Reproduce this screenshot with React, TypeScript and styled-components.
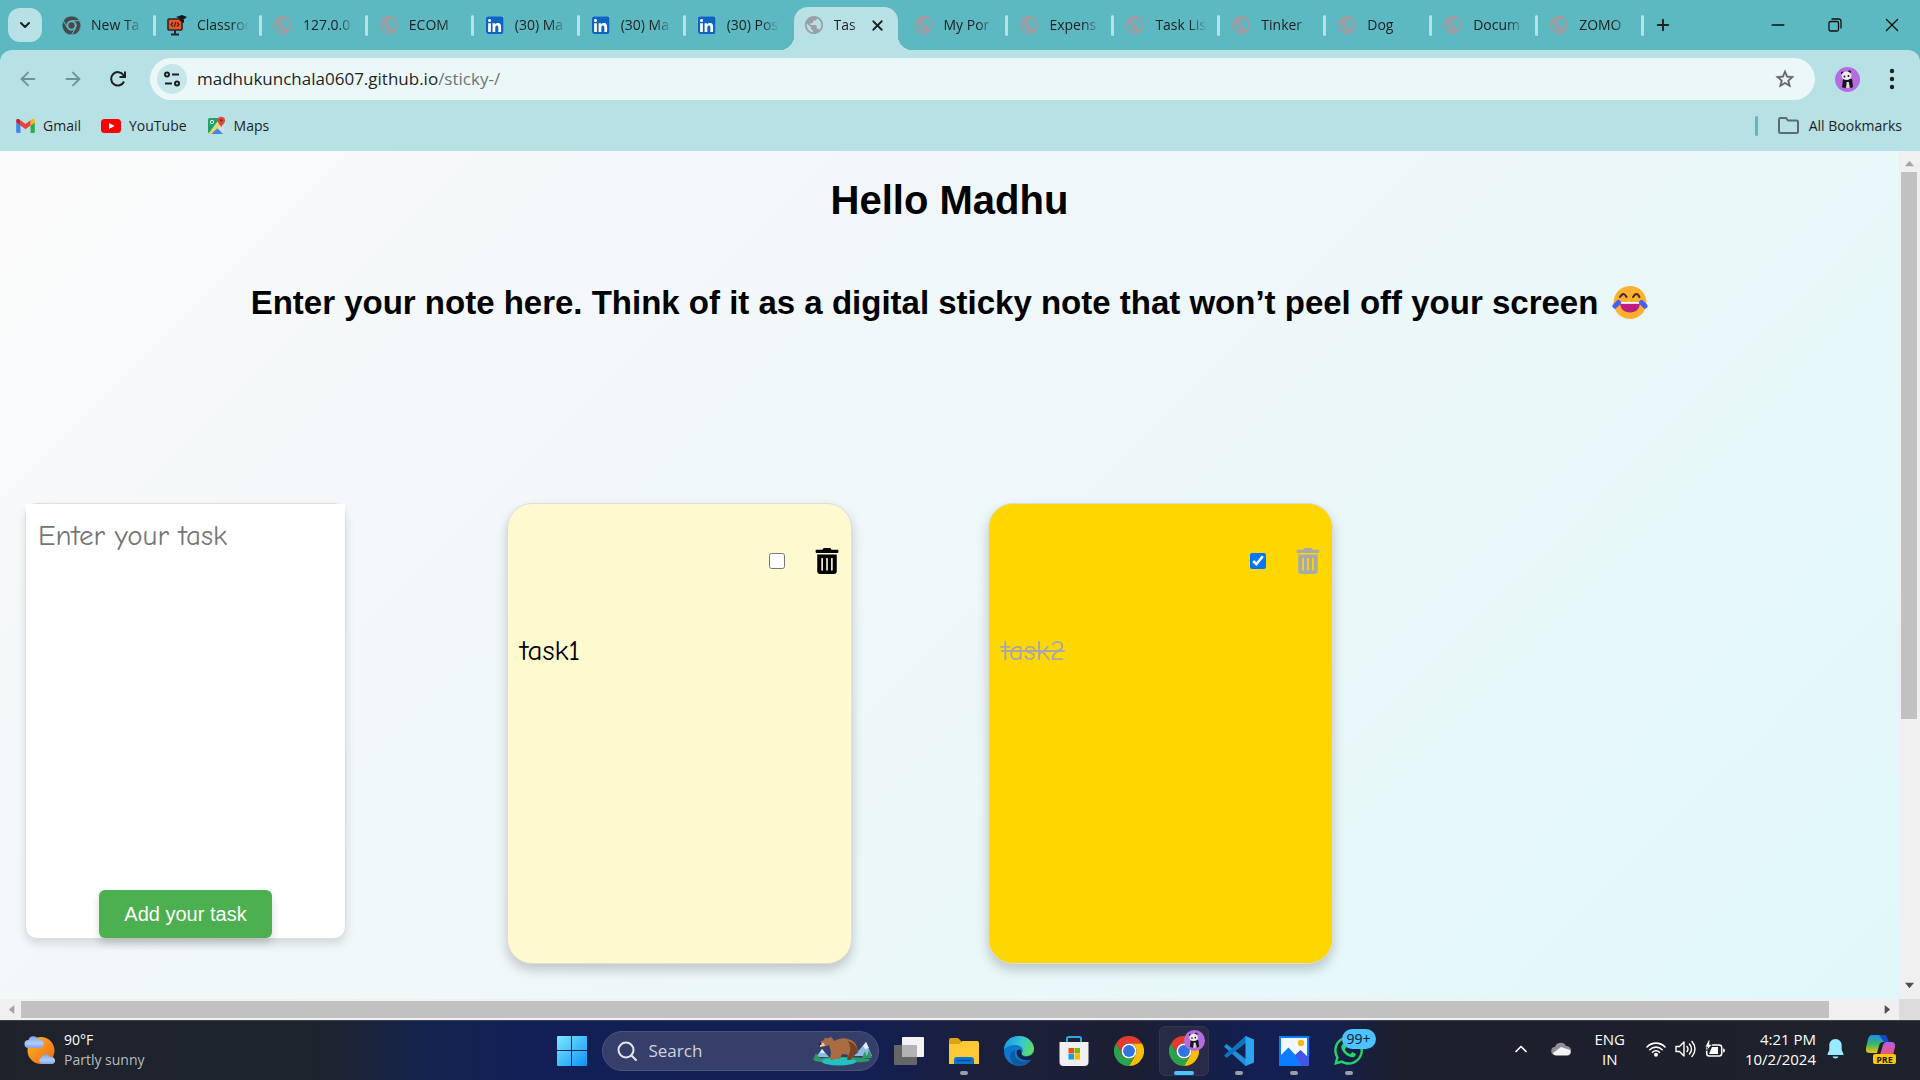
import React, { useState } from "react";
import styled, { createGlobalStyle, css } from "styled-components";
import { FaLinkedin, FaTrashAlt, FaWhatsapp } from "react-icons/fa";
import { ArrowLeft, ArrowRight, ChevronDown, ChevronUp, Minus, Plus, X } from "lucide-react";

const uiFont = `"Segoe UI", "Open Sans", "Noto Sans", sans-serif`;
const pageFont = `Arial, "Liberation Sans", sans-serif`;
const noteFont = `"Comic Neue", "Comic Sans MS", Lato, sans-serif`;

const GlobalStyle = createGlobalStyle`
  *, *::before, *::after { box-sizing: border-box; }
  body { margin: 0; font-family: ${uiFont}; color: #1f1f1f; }
  button, input, textarea { font: inherit; color: inherit; }
  svg { display: block; flex: none; }
`;

const Screen = styled.div`
  display: flex;
  flex-direction: column;
  height: 100vh;
  overflow: hidden;
  background: #5cb8c1;
`;

const PlainButton = styled.button`
  display: flex;
  align-items: center;
  justify-content: center;
  padding: 0;
  border: 0;
  background: none;
`;

/* ---------- tab strip ---------- */

const TabStrip = styled.div`
  display: flex;
  height: 50px;
  padding-left: 8px;
`;

const TabSearch = styled(PlainButton)`
  width: 34px;
  height: 34px;
  margin: 8px 6px 0 0;
  border-radius: 12px;
  background: #b8e1e5;
`;

const TabList = styled.div`
  display: flex;
  flex: 0 1 1594px;
  min-width: 0;
`;

const TabItem = styled.div<{ $active: boolean; $divider: boolean }>`
  position: relative;
  display: flex;
  flex: 1 1 0;
  min-width: 0;
  align-items: center;
  padding: 0 11px 0 13px;
  ${(p) =>
    p.$divider &&
    css`
      &::after {
        content: "";
        position: absolute;
        right: -2px;
        top: 15px;
        width: 3px;
        height: 21px;
        border-radius: 2px;
        background: #b8e1e5;
      }
    `}
  ${(p) =>
    p.$active &&
    css`
      margin: 7px 3px 0 4px;
      padding: 0 12px 7px 10px;
      border-radius: 14px 14px 0 0;
      background: #b8e1e5;
      &::before,
      &::after {
        content: "";
        position: absolute;
        bottom: 0;
        width: 14px;
        height: 14px;
      }
      &::before {
        right: 100%;
        background: radial-gradient(circle at 0 0, transparent 14px, #b8e1e5 14px);
      }
      &::after {
        left: 100%;
        background: radial-gradient(circle at 100% 0, transparent 14px, #b8e1e5 14px);
      }
    `}
`;

const TabButton = styled.button`
  display: flex;
  flex: 1;
  min-width: 0;
  align-items: center;
  gap: 10px;
  padding: 0;
  border: 0;
  background: none;
  text-align: left;
`;

const TabIconSlot = styled.span`
  display: flex;
  flex: none;
  align-items: center;
  justify-content: center;
  width: 20px;
`;

const TabLabel = styled.span`
  flex: 1;
  min-width: 0;
  overflow: hidden;
  font-size: 14px;
  line-height: 20px;
  white-space: nowrap;
  mask-image: linear-gradient(to left, transparent, #000 18px);
`;

const NewTab = styled(PlainButton)`
  width: 42px;
`;

const WindowControls = styled.div`
  display: flex;
  margin-left: auto;
  color: #111;
`;

const WindowButton = styled(PlainButton)`
  width: 57px;
`;

/* ---------- toolbar ---------- */

const ChromeTop = styled.header`
  flex: none;
  border-radius: 12px 12px 0 0;
  background: #b8e1e5;
`;

const Toolbar = styled.div`
  display: flex;
  align-items: center;
  height: 57px;
  padding: 8px 14px 7px 5px;
`;

const NavButton = styled(PlainButton)<{ $dim?: boolean }>`
  width: 45px;
  height: 42px;
  color: ${(p) => (p.$dim ? "#6f9296" : "#1f1f1f")};
`;

const AddressBar = styled.div`
  display: flex;
  flex: 1;
  align-items: center;
  height: 42px;
  margin: 0 15px 0 10px;
  padding: 0 19px 0 7px;
  border-radius: 21px;
  background: #ecf8f8;
`;

const SiteInfo = styled(PlainButton)`
  width: 30px;
  height: 30px;
  margin-right: 10px;
  border-radius: 50%;
  background: #c5e7ea;
`;

const UrlInput = styled.input`
  field-sizing: content;
  padding: 0;
  border: 0;
  outline: 0;
  background: none;
  font-size: 17px;
  line-height: 24px;
`;

const UrlPath = styled.span`
  color: #6b7576;
  font-size: 17px;
  line-height: 24px;
`;

const StarButton = styled(PlainButton)`
  margin-left: auto;
`;

const ProfileButton = styled(PlainButton)`
  width: 34px;
`;

const MenuButton = styled(PlainButton)`
  width: 28px;
  margin-left: 14px;
`;

const Bookmarks = styled.nav`
  display: flex;
  align-items: center;
  gap: 20px;
  height: 44px;
  padding: 0 18px 7px 16px;
`;

const BookmarkLink = styled.a<{ $gap?: number }>`
  display: flex;
  align-items: center;
  gap: ${(p) => p.$gap ?? 8}px;
  color: #1f1f1f;
  font-size: 14px;
  line-height: 20px;
  text-decoration: none;
`;

const BookmarkDivider = styled.span`
  width: 3px;
  height: 20px;
  margin-left: auto;
  border-radius: 2px;
  background: #5cb8c1;
`;

/* ---------- page ---------- */

const Viewport = styled.div`
  display: grid;
  flex: 1;
  grid-template-columns: minmax(0, 1fr) 21px;
  grid-template-rows: minmax(0, 1fr) 21px;
  min-height: 0;
`;

const Page = styled.main`
  overflow: hidden;
  padding: 26px 25px 0;
  background: linear-gradient(135deg, #fafafa, #f4f8fa 25%, #eef7f9 50%, #e8f8f9 72%, #e0f7fa);
  color: #000;
  font-family: ${pageFont};
`;

const Heading = styled.h1`
  margin: 0;
  font-size: 40px;
  line-height: 46px;
  text-align: center;
`;

const Subheading = styled.h2`
  display: flex;
  align-items: center;
  justify-content: center;
  gap: 14px;
  margin: 57px 0 0;
  font-size: 33px;
  line-height: 46px;
`;

const Board = styled.div`
  display: flex;
  align-items: flex-start;
  gap: 136px;
  margin-top: 177px;
`;

const TaskForm = styled.form`
  display: flex;
  flex: none;
  flex-direction: column;
  align-items: center;
  width: 321px;
  height: 436px;
  margin-right: 25px;
  border: 1px solid #ddd;
  border-radius: 12px;
  background: #fff;
  box-shadow: 0 5px 10px rgba(0, 0, 0, 0.12);
`;

const TaskInput = styled.textarea`
  flex: 1;
  width: 100%;
  padding: 13px 12px;
  border: 0;
  outline: 0;
  resize: none;
  background: #fff;
  font-family: ${noteFont};
  font-size: 29px;
  line-height: 38px;
  &::placeholder {
    color: #757575;
  }
`;

const AddButton = styled.button`
  width: 173px;
  height: 48px;
  border: 0;
  border-radius: 6px;
  background: #4caf50;
  box-shadow: 0 5px 8px rgba(0, 0, 0, 0.16);
  color: #fff;
  font-size: 20px;
  line-height: 24px;
`;

const Note = styled.article<{ $done: boolean }>`
  flex: none;
  width: 345px;
  min-height: 461px;
  padding: 43px 11px 20px 12px;
  border: 1px solid #ddd;
  border-radius: 25px;
  background: ${(p) => (p.$done ? "#ffd700" : "#fff9d0")};
  box-shadow: 0 6px 12px rgba(0, 0, 0, 0.2);
  color: ${(p) => (p.$done ? "#a9a9a9" : "#000")};
`;

const NoteActions = styled.div`
  display: flex;
  align-items: center;
  justify-content: flex-end;
  gap: 29px;
  height: 27px;
`;

const Check = styled.input`
  width: 16px;
  height: 16px;
  margin: 0;
`;

const NoteText = styled.label<{ $done: boolean }>`
  display: block;
  margin-top: 58px;
  font-family: ${noteFont};
  font-size: 29px;
  line-height: 38px;
  text-decoration: ${(p) => (p.$done ? "line-through" : "none")};
`;

/* ---------- scrollbars ---------- */

const VerticalBar = styled.div`
  display: flex;
  flex-direction: column;
  align-items: center;
  gap: 4px;
  padding: 8px 3px 9px 2px;
  background: #f0f0f0;
`;

const HorizontalBar = styled.div`
  display: flex;
  align-items: center;
  gap: 4px;
  padding: 2px 8px;
  background: #f0f0f0;
`;

const VerticalTrack = styled.div`
  flex: 1;
  width: 16px;
`;

const VerticalThumb = styled.div`
  height: 68%;
  background: #c1c1c1;
`;

const HorizontalTrack = styled.div`
  display: grid;
  flex: 1;
  grid-template-columns: 37fr 1fr;
  height: 17px;
`;

const HorizontalThumb = styled.div`
  background: #c1c1c1;
`;

const Corner = styled.div`
  background: #dcdcdc;
`;

/* ---------- taskbar ---------- */

const Taskbar = styled.footer`
  display: grid;
  flex: none;
  grid-template-columns: 1fr auto 1fr;
  align-items: center;
  height: 60px;
  border-top: 1px solid #3b4150;
  background: linear-gradient(
    90deg,
    #1e222b 0%,
    #1d232e 17%,
    #13234c 22%,
    #121f56 27%,
    #131f54 45%,
    #1b1f3a 51%,
    #1c1f33 59%,
    #121f50 65%,
    #142050 69%,
    #1d1f2c 73%,
    #1d222c 100%
  );
  color: #fff;
`;

const Weather = styled.div`
  display: flex;
  align-items: center;
  gap: 8px;
  padding: 0 0 2px 24px;
`;

const WeatherText = styled.div`
  display: flex;
  flex-direction: column;
  font-size: 14px;
  line-height: 20px;
`;

const Muted = styled.span`
  color: #b9bcc0;
`;

const AppRow = styled.div`
  display: flex;
  align-items: center;
  gap: 5px;
`;

const AppButton = styled(PlainButton)<{ $active?: boolean; $running?: boolean }>`
  position: relative;
  width: 50px;
  height: 50px;
  border-radius: 6px;
  ${(p) =>
    p.$active &&
    css`
      border: 1px solid #323651;
      background: #272b45;
    `}
  ${(p) =>
    (p.$active || p.$running) &&
    css`
      &::after {
        content: "";
        position: absolute;
        bottom: ${p.$active ? 0 : 1}px;
        left: 50%;
        width: ${p.$active ? 20 : 8}px;
        height: 4px;
        border-radius: 2px;
        background: ${p.$active ? "#4cc2ff" : "#9b9dac"};
        transform: translateX(-50%);
      }
    `}
`;

const Badge = styled.span`
  position: absolute;
  top: 3px;
  left: 18px;
  padding: 0 5px;
  border-radius: 10px;
  background: #4cc2ff;
  color: #0b1a2a;
  font-size: 14px;
  line-height: 20px;
`;

const ProfileBadge = styled.span`
  position: absolute;
  top: 3px;
  right: 3px;
`;

const SearchBox = styled.label`
  display: flex;
  align-items: center;
  gap: 12px;
  width: 277px;
  height: 40px;
  padding: 0 6px 0 14px;
  border: 1px solid #4a5479;
  border-radius: 20px;
  background: #353f69;
`;

const SearchInput = styled.input`
  flex: 1;
  min-width: 0;
  padding: 0;
  border: 0;
  outline: 0;
  background: none;
  font-size: 17px;
  line-height: 24px;
  &::placeholder {
    color: #d0d3de;
    opacity: 1;
  }
`;

const Tray = styled.div`
  display: flex;
  align-items: center;
  justify-content: flex-end;
  padding: 0 24px 3px 0;
`;

const TrayStack = styled.div<{ $align: string }>`
  display: flex;
  flex-direction: column;
  font-size: 15px;
  line-height: 20px;
  text-align: ${(p) => p.$align};
`;

const CloudSlot = styled.span`
  margin: 0 23px 0 20px;
`;

const StatusIcons = styled.div`
  display: flex;
  align-items: center;
  gap: 9px;
  margin: 0 20px 0 21px;
`;

const TrayIcon = styled.span`
  margin-left: 11px;
`;

const CopilotIcon = styled.span`
  margin-left: 22px;
`;

/* ---------- drawings ---------- */

const Globe = ({ color = "#9a9ea5" }: { color?: string }) => (
  <svg width="20" height="20" viewBox="1 1 22 22">
    <path
      fill={color}
      d="M12 2C6.48 2 2 6.48 2 12s4.48 10 10 10 10-4.48 10-10S17.52 2 12 2zm-1 17.93c-3.95-.49-7-3.85-7-7.93 0-.62.08-1.21.21-1.79L9 15v1c0 1.1.9 2 2 2v1.93zm6.9-2.54c-.26-.81-1-1.39-1.9-1.39h-1v-3c0-.55-.45-1-1-1H8v-2h2c.55 0 1-.45 1-1V7h2c1.1 0 2-.9 2-2v-.41c2.93 1.19 5 4.06 5 7.41 0 2.08-.8 3.97-2.1 5.39z"
    />
  </svg>
);

const wedge = "M3.2 12A24 24 0 0 1 44.8 12H24A12 12 0 0 0 13.6 30Z";

const ChromeLogo = ({ size = 30, mono = false }: { size?: number; mono?: boolean }) => (
  <svg width={size} height={size} viewBox="0 0 48 48">
    <path d={wedge} fill={mono ? "#45494d" : "#e33b2e"} stroke={mono ? "#5cb8c1" : "none"} strokeWidth="2" />
    <path d={wedge} fill={mono ? "#45494d" : "#fbbc05"} stroke={mono ? "#5cb8c1" : "none"} strokeWidth="2" transform="rotate(120 24 24)" />
    <path d={wedge} fill={mono ? "#45494d" : "#2ba24c"} stroke={mono ? "#5cb8c1" : "none"} strokeWidth="2" transform="rotate(240 24 24)" />
    <circle cx="24" cy="24" r="12" fill={mono ? "#5cb8c1" : "#fff"} />
    <circle cx="24" cy="24" r={mono ? 8 : 9.5} fill={mono ? "#45494d" : "#3474e0"} />
  </svg>
);

const ClassroomIcon = () => (
  <svg width="20" height="22" viewBox="0 0 20 22">
    <rect x="1" y="5" width="14" height="11" rx="1" fill="#f4511e" stroke="#27272b" strokeWidth="1.6" />
    <path d="M6 8.5L4 10.5l2 2M10 8.5l2 2-2 2M8.7 8L7.4 13" fill="none" stroke="#27272b" strokeWidth="1.1" />
    <path d="M8 16v4M4 20.500h8" stroke="#27272b" strokeWidth="2" />
    <path d="M9 3l6-2 5 2-4 3zM12 5l5 1v3l-4-2z" fill="#15171a" />
  </svg>
);

const Panda = ({ size }: { size: number }) => (
  <svg width={size} height={size} viewBox="0 0 25 25">
    <circle cx="12.500" cy="12.500" r="12.500" fill="#b76be0" />
    <path d="M8 12h9l1 8-2.500 1.200-1-4h-3l-1 4-3.500-1z" fill="#17141a" />
    <path d="M11.500 15h2.500v6h-2.500z" fill="#ddd" />
    <circle cx="7.500" cy="6" r="1.600" fill="#17141a" />
    <circle cx="14.500" cy="4.800" r="1.600" fill="#17141a" />
    <ellipse cx="11.500" cy="8.800" rx="5" ry="4.200" fill="#eceaf0" />
    <circle cx="9.500" cy="9.500" r="1" fill="#17141a" />
    <circle cx="13.500" cy="9" r="1" fill="#17141a" />
  </svg>
);

const GmailIcon = () => (
  <svg width="19" height="14" viewBox="0 0 52 39">
    <path d="M3.500 39H12V18L0 9v26.500C0 37.500 1.500 39 3.500 39z" fill="#4285f4" />
    <path d="M40 39h8.500c2 0 3.500-1.500 3.500-3.500V9l-12 9z" fill="#34a853" />
    <path d="M40 3.500V18l12-9V4.500c0-4-5-6.500-8.500-3.700z" fill="#fbbc04" />
    <path d="M12 18V3.500L26 14 40 3.500V18L26 28.500z" fill="#ea4335" />
    <path d="M0 4.500V9l12 9V3.500L8.500.800C5-2 0 .500 0 4.500z" fill="#c5221f" />
  </svg>
);

const YouTubeIcon = () => (
  <svg width="20" height="14" viewBox="0 0 20 14">
    <rect width="20" height="14" rx="3.500" fill="#f00" />
    <path d="M8 4l5.500 3L8 10z" fill="#fff" />
  </svg>
);

const MapsIcon = () => (
  <svg width="19" height="19" viewBox="0 0 19 19">
    <path d="M1 3.500Q1 2 2.500 2H13L2 17Q1 17 1 15.500z" fill="#1fa463" />
    <path d="M2 18L9 11l7 7z" fill="#4285f4" />
    <path d="M16.500 9v8L11 11.500z" fill="#dadce0" />
    <path d="M2 17L14 4.500l2 2L4 18.500z" fill="#fdd34a" />
    <path d="M14.200 12c0-3-3.700-4-3.700-7.500a3.700 3.700 0 0 1 7.500 0C18 8 14.200 9 14.200 12z" fill="#dd4b3e" />
    <circle cx="14.200" cy="4.300" r="1.300" fill="#822b24" />
    <circle cx="5" cy="6" r="1.700" fill="none" stroke="#fff" />
  </svg>
);

const ReloadIcon = () => (
  <svg width="18" height="18" viewBox="0 0 18 18" fill="none" stroke="currentColor" strokeWidth="2">
    <path d="M15 11.500A6.700 6.700 0 1 1 14.500 5.200L15.500 6.500" />
    <path d="M16 1.500v5.500h-5.500" />
  </svg>
);

const TuneIcon = () => (
  <svg width="18" height="18" viewBox="0 0 18 18" fill="none" stroke="#1f1f1f" strokeWidth="2">
    <circle cx="4" cy="4.500" r="2" />
    <path d="M9 4.500h7M2 13.500h7" />
    <circle cx="14" cy="13.500" r="2" />
  </svg>
);

const StarIcon = () => (
  <svg width="22" height="22" viewBox="0 0 24 24" fill="#5b6364" stroke="#5b6364" strokeWidth="0.400">
    <path d="M22 9.240l-7.190-.620L12 2 9.190 8.630 2 9.240l5.460 4.730L5.820 21 12 17.270 18.180 21l-1.630-7.030L22 9.240zM12 15.400l-3.760 2.270 1-4.280-3.320-2.880 4.380-.380L12 6.100l1.710 4.040 4.380.380-3.320 2.880 1 4.280L12 15.400z" />
  </svg>
);

const DotsIcon = () => (
  <svg width="6" height="22" viewBox="0 0 6 22" fill="#1f1f1f">
    <circle cx="3" cy="3" r="2.200" />
    <circle cx="3" cy="11" r="2.200" />
    <circle cx="3" cy="19" r="2.200" />
  </svg>
);

const FolderIcon = () => (
  <svg width="21" height="17" viewBox="0 0 21 17" fill="none" stroke="#5f6a6c" strokeWidth="2">
    <path d="M1 2.500Q1 1 2.500 1H8l2 2.500h8.500Q20 3.500 20 5v9.500q0 1.500-1.500 1.500h-16Q1 16 1 14.500z" />
  </svg>
);

const RestoreIcon = () => (
  <svg width="14" height="14" viewBox="0 0 14 14" fill="none" stroke="#111" strokeWidth="1.300">
    <rect x="1" y="3.500" width="9.500" height="9.500" rx="1.500" />
    <path d="M3.500 1h7Q13 1 13 3.500v7" />
  </svg>
);

const JoyEmoji = () => (
  <svg width="36" height="36" viewBox="0 0 36 36" role="img" aria-label="face with tears of joy">
    <circle cx="18" cy="17.500" r="16.500" fill="#ffb02e" />
    <path d="M8 12q3.500-6 6.500 0M21 12q3.500-6 6.500 0" fill="none" stroke="#402a32" strokeWidth="2" strokeLinecap="round" />
    <path d="M8 17h20c0 7-4 10.500-10 10.500S8 24 8 17z" fill="#bb1d80" />
    <path d="M8 17h20v1.800H8z" fill="#fff" />
    <path d="M6.500 17.500L3 21M29.500 17.500L33 21" stroke="#3f5fff" strokeWidth="5" strokeLinecap="round" />
  </svg>
);

const Arrow = ({ d, color }: { d: string; color: string }) => (
  <svg width="9" height="9" viewBox="0 0 10 10">
    <path d={d} fill={color} />
  </svg>
);

const SunIcon = () => (
  <svg width="32" height="30" viewBox="0 0 32 30">
    <defs>
      <linearGradient id="sun" x1="0" y1="0" x2="1" y2="1">
        <stop offset="0" stopColor="#f9b81f" />
        <stop offset="1" stopColor="#f0661a" />
      </linearGradient>
      <linearGradient id="cloud" x1="0" y1="0" x2="0" y2="1">
        <stop offset="0" stopColor="#7fa2ea" />
        <stop offset="0.600" stopColor="#b3ccfa" />
        <stop offset="1" stopColor="#7ea3ec" />
      </linearGradient>
    </defs>
    <circle cx="17" cy="15.500" r="13.500" fill="url(#sun)" />
    <path d="M4.500 13a4 4 0 0 1 0-8A5 5 0 0 1 14 4.500a4.300 4.300 0 0 1 2.500 8.500z" fill="url(#cloud)" />
    <path d="M17.500 29a3.500 3.500 0 0 1 0-6.500 4.500 4.500 0 0 1 8.500-.500 3.500 3.500 0 0 1 2.500 7z" fill="url(#cloud)" />
  </svg>
);

const WindowsIcon = () => (
  <svg width="30" height="30" viewBox="0 0 30 30">
    <defs>
      <linearGradient id="win" x1="0" y1="0" x2="1" y2="1">
        <stop offset="0" stopColor="#7beaff" />
        <stop offset="1" stopColor="#0c93f5" />
      </linearGradient>
    </defs>
    <path d="M1 0h13v14H0V1q0-1 1-1zM15 0h14q1 0 1 1v13H15zM0 15h14v15H1q-1 0-1-1zM15 15h15v14q0 1-1 1H15z" fill="url(#win)" />
  </svg>
);

const BearIcon = () => (
  <svg width="60" height="30" viewBox="0 0 60 30">
    <path d="M4 21l6-8 7 8zM42 20L54 6l6 14z" fill="#8fb9e0" />
    <path d="M10 13l3 4-5 0zM54 6l3 6-4 1-2-3z" fill="#e3eefb" />
    <path d="M1 24l3-7 3 7zM4 24l2-5 3 5zM50 22l3-7 2 7zM54 22l3-8 3 8z" fill="#2c9a63" />
    <ellipse cx="30" cy="24" rx="28" ry="3" fill="#2a9c6d" />
    <ellipse cx="27" cy="25.500" rx="17" ry="4" fill="#1fc3c2" />
    <path d="M8 8q0-3 4-4l1-2.500 2 1 4-1.500 2 2 1 2q7-4 14-2 8 2 9 9l1 4-4 1-2 7h-5l1-5q-3-1-6-1l-2 5h-5l-2 1h-3l1-8-2-7q-3 2-7 1z" fill="#a96c44" />
    <path d="M36 5q7 2 9 8l1 4-4 1-3 6h-4l2-6q3-6-1-13z" fill="#74431f" />
    <path d="M8 7l4 0 1 3-5 1z" fill="#e7c7a8" />
    <circle cx="8.300" cy="7.800" r="1.200" fill="#222" />
  </svg>
);

const TaskViewIcon = () => (
  <svg width="30" height="28" viewBox="0 0 30 28">
    <rect x="0" y="8" width="23" height="20" rx="1" fill="#666" />
    <rect x="8" y="0" width="22" height="20" rx="1" fill="#f3f3f3" />
    <path d="M8 8h15v12H8z" fill="#b3b3b3" />
  </svg>
);

const ExplorerIcon = () => (
  <svg width="30" height="26" viewBox="0 0 30 26">
    <path d="M0 2q0-2 2-2h7l3 3h0v8H0z" fill="#e0a010" />
    <path d="M0 6h10l3-3h15q2 0 2 2v21H0z" fill="#fdc936" />
    <path d="M5 26v-4q0-3 3-3h14q3 0 3 3v4z" fill="#0b76d1" />
    <path d="M8 22.500h14" stroke="#0a4d96" strokeWidth="1.400" />
  </svg>
);

const EdgeIcon = () => (
  <svg width="30" height="30" viewBox="0 0 30 30">
    <defs>
      <linearGradient id="edgeTop" x1="0" y1="0.300" x2="1" y2="0.600">
        <stop offset="0" stopColor="#1b9be0" />
        <stop offset="0.550" stopColor="#36c8d0" />
        <stop offset="1" stopColor="#5fdc5c" />
      </linearGradient>
    </defs>
    <circle cx="15" cy="15" r="15" fill="#0c78d0" />
    <path d="M0 14C0 6 6 0 15 0s15 6.500 15 12.500c0 5-4 7.500-8 7.500-3 0-5-1.500-4-3 2.500-4-1-8-6.500-8C6 9 1 11 0 14z" fill="url(#edgeTop)" />
    <path d="M11 14c-2 8 5 13 12 11l4.500-2C24 28 20 30 15 30 9 30 5 24 6.500 18.500 7.500 15.500 9 14.500 11 14z" fill="#125a9f" />
    <path d="M17.500 17c-.500 3 4 5 9 2.500 2-1 3.500-3 3.500-4.500v6l-2.500 2.500C20 26 11 22 13 14.500c2-2 5-1 4.500 2.500z" fill="#1b2140" />
  </svg>
);

const StoreIcon = () => (
  <svg width="30" height="30" viewBox="0 0 30 30">
    <path d="M8 7V2.500Q8 1 9.500 1h11Q22 1 22 2.500V7" fill="none" stroke="#28a8e8" strokeWidth="2" />
    <path d="M.500 6h29v20q0 4-4 4h-21q-4 0-4-4z" fill="#f0f0f0" />
    <path d="M9.500 12H15v5.500H9.500z" fill="#f04e1f" />
    <path d="M15.500 12H21v5.500h-5.500z" fill="#7fba00" />
    <path d="M9.500 18H15v5.500H9.500z" fill="#00a4ef" />
    <path d="M15.500 18H21v5.500h-5.500z" fill="#ffb900" />
  </svg>
);

const CodeIcon = () => (
  <svg width="30" height="30" viewBox="0 0 30 30">
    <path d="M0 10.500L2.500 8 23 24v5.500L21.500 30z" fill="#1f8fd8" />
    <path d="M0 19.500L2.500 22 23 6V.500L21.500 0z" fill="#0f74bd" />
    <path d="M21.500 0L30 3.500v23L21.500 30z" fill="#2ba5ef" />
  </svg>
);

const PhotosIcon = () => (
  <svg width="30" height="30" viewBox="0 0 30 30">
    <path d="M0 0h30v30H0z" fill="#0a7cff" />
    <path d="M2 2h26v18H2z" fill="#f2f8ff" />
    <circle cx="22" cy="7" r="3.200" fill="#fdb714" />
    <path d="M0 21l9.500-9.500L20 23v7H0z" fill="#0a7cff" />
    <path d="M16 19l5.500-5L30 22v8h-7z" fill="#4553e6" />
  </svg>
);

const CloudIcon = () => (
  <svg width="20" height="14" viewBox="0 0 20 14">
    <path d="M4.500 13a4 4 0 0 1-.500-8A6 6 0 0 1 15 4a4.500 4.500 0 0 1 1 9z" fill="#8d8f94" />
    <path d="M2 11l8-6 9 3q2 5-3 5.500H5Q2.500 13.500 2 11z" fill="#f4f4f4" />
  </svg>
);

const WifiIcon = () => (
  <svg width="20" height="16" viewBox="0 0 20 16" fill="none" stroke="#fff" strokeWidth="1.600" strokeLinecap="round">
    <path d="M1 6a12.500 12.500 0 0 1 18 0M3.800 8.700a8.800 8.800 0 0 1 12.400 0M6.500 11.300a5 5 0 0 1 7 0" />
    <circle cx="10" cy="13.800" r="1.200" fill="#fff" />
  </svg>
);

const VolumeIcon = () => (
  <svg width="21" height="18" viewBox="0 0 21 18" fill="none" stroke="#fff" strokeWidth="1.400" strokeLinecap="round" strokeLinejoin="round">
    <path d="M1 6.500v5h3.500L9 16V2L4.500 6.500zM12 6.500q2 2.500 0 5M14.500 4q4 5 0 10M17 1.500q6 7.500 0 15" />
  </svg>
);

const BatteryIcon = () => (
  <svg width="20" height="18" viewBox="0 0 20 18">
    <rect x="1.700" y="5" width="15" height="11" rx="2.500" fill="none" stroke="#fff" strokeWidth="1.500" />
    <path d="M18 8.500q2 0 2 2t-2 2z" fill="#fff" />
    <path d="M7 7h6v7H4z" fill="#fff" />
    <path d="M3.500 0L0 7h2.500L1.500 11 7 4.500H4.500L5 0z" fill="#fff" stroke="#1d222c" strokeWidth="0.800" />
  </svg>
);

const BellIcon = () => (
  <svg width="17" height="20" viewBox="0 0 17 20" fill="#99ebff">
    <path d="M8.500 0C4.500 0 2.300 3 2.300 6.500V11L.500 15q-.300 1 .700 1h14.600q1 0 .700-1l-1.800-4V6.500C14.700 3 12.500 0 8.500 0zM5.500 17.500h6q-.500 2-3 2t-3-2z" />
  </svg>
);

const Copilot = () => (
  <svg width="30" height="30" viewBox="0 0 30 30">
    <defs>
      <linearGradient id="cpA" x1="0" y1="0" x2="0" y2="1">
        <stop offset="0" stopColor="#1c8bf0" />
        <stop offset="0.500" stopColor="#38b56a" />
        <stop offset="1" stopColor="#f2c318" />
      </linearGradient>
      <linearGradient id="cpB" x1="0" y1="0" x2="0" y2="1">
        <stop offset="0" stopColor="#b45cf0" />
        <stop offset="1" stopColor="#f0586a" />
      </linearGradient>
    </defs>
    <path d="M6 1h11q3 0 4 4l1 3h-5q-3 0-4 4l-2 7H4q-5 0-4-5l2-9Q3 1 6 1z" fill="url(#cpA)" />
    <path d="M13 1h5q3 0 4 5l1 2h-5z" fill="#1748c9" />
    <path d="M20 8h5q5 0 4 5l-2 8H14l3-10q1-3 3-3z" fill="url(#cpB)" />
    <rect x="7" y="20" width="23" height="10" rx="2" fill="#ffc60a" />
    <text x="18.500" y="28.500" textAnchor="middle" fontFamily="Open Sans, sans-serif" fontWeight="700" fontSize="9" fill="#1d1d1d">
      PRE
    </text>
  </svg>
);

/* ---------- data ---------- */

type TabIcon = "chrome" | "class" | "globe" | "linkedin";

const tabs: { title: string; icon: TabIcon; active?: boolean }[] = [
  { title: "New Ta", icon: "chrome" },
  { title: "Classroo", icon: "class" },
  { title: "127.0.0", icon: "globe" },
  { title: "ECOM", icon: "globe" },
  { title: "(30) Ma", icon: "linkedin" },
  { title: "(30) Ma", icon: "linkedin" },
  { title: "(30) Pos", icon: "linkedin" },
  { title: "Tas", icon: "globe", active: true },
  { title: "My Por", icon: "globe" },
  { title: "Expens", icon: "globe" },
  { title: "Task Lis", icon: "globe" },
  { title: "Tinker", icon: "globe" },
  { title: "Dog", icon: "globe" },
  { title: "Docum", icon: "globe" },
  { title: "ZOMO", icon: "globe" },
];

const LinkedInTile = styled.span`
  display: flex;
  width: 18px;
  height: 18px;
  align-items: center;
  justify-content: center;
  overflow: hidden;
  border-radius: 2px;
  background: #fff;
  color: #0a66c2;
  font-size: 21px;
`;

const iconFor = (icon: TabIcon, active?: boolean) => {
  if (icon === "chrome") return <ChromeLogo size={19} mono />;
  if (icon === "class") return <ClassroomIcon />;
  if (icon === "linkedin")
    return (
      <LinkedInTile>
        <FaLinkedin />
      </LinkedInTile>
    );
  return <Globe color={active ? "#9a9ea5" : "#a09ca3"} />;
};

export default function App() {
  const [notes, setNotes] = useState([
    { id: 1, text: "task1", done: false },
    { id: 2, text: "task2", done: true },
  ]);
  const [draft, setDraft] = useState("");

  const addNote = (event: React.FormEvent) => {
    event.preventDefault();
    if (!draft.trim()) return;
    setNotes([...notes, { id: Date.now(), text: draft, done: false }]);
    setDraft("");
  };

  return (
    <Screen>
      <GlobalStyle />
      <TabStrip>
        <TabSearch aria-label="Search tabs">
          <ChevronDown size={16} strokeWidth={3} />
        </TabSearch>
        <TabList>
          {tabs.map((tab, i) => (
            <TabItem key={i} $active={!!tab.active} $divider={!tab.active && !tabs[i + 1]?.active}>
              <TabButton>
                <TabIconSlot>{iconFor(tab.icon, tab.active)}</TabIconSlot>
                <TabLabel>{tab.title}</TabLabel>
              </TabButton>
              {tab.active && (
                <PlainButton aria-label="Close tab">
                  <X size={17} strokeWidth={2.5} />
                </PlainButton>
              )}
            </TabItem>
          ))}
        </TabList>
        <NewTab aria-label="New tab">
          <Plus size={18} strokeWidth={2.5} />
        </NewTab>
        <WindowControls>
          <WindowButton aria-label="Minimize">
            <Minus size={20} strokeWidth={1.8} />
          </WindowButton>
          <WindowButton aria-label="Restore">
            <RestoreIcon />
          </WindowButton>
          <WindowButton aria-label="Close window">
            <X size={22} strokeWidth={1.5} />
          </WindowButton>
        </WindowControls>
      </TabStrip>

      <ChromeTop>
        <Toolbar>
          <NavButton $dim aria-label="Back">
            <ArrowLeft size={22} strokeWidth={2} />
          </NavButton>
          <NavButton $dim aria-label="Forward">
            <ArrowRight size={22} strokeWidth={2} />
          </NavButton>
          <NavButton aria-label="Reload">
            <ReloadIcon />
          </NavButton>
          <AddressBar>
            <SiteInfo aria-label="Site information">
              <TuneIcon />
            </SiteInfo>
            <UrlInput aria-label="Address" defaultValue="madhukunchala0607.github.io" />
            <UrlPath>/sticky-/</UrlPath>
            <StarButton aria-label="Bookmark this page">
              <StarIcon />
            </StarButton>
          </AddressBar>
          <ProfileButton aria-label="Profile">
            <Panda size={25} />
          </ProfileButton>
          <MenuButton aria-label="Menu">
            <DotsIcon />
          </MenuButton>
        </Toolbar>
        <Bookmarks>
          <BookmarkLink href="#gmail">
            <GmailIcon />
            Gmail
          </BookmarkLink>
          <BookmarkLink href="#youtube">
            <YouTubeIcon />
            YouTube
          </BookmarkLink>
          <BookmarkLink href="#maps">
            <MapsIcon />
            Maps
          </BookmarkLink>
          <BookmarkDivider />
          <BookmarkLink href="#bookmarks" $gap={10}>
            <FolderIcon />
            All Bookmarks
          </BookmarkLink>
        </Bookmarks>
      </ChromeTop>

      <Viewport>
        <Page>
          <Heading>Hello Madhu</Heading>
          <Subheading>
            Enter your note here. Think of it as a digital sticky note that won’t peel off your screen
            <JoyEmoji />
          </Subheading>
          <Board>
            <TaskForm onSubmit={addNote}>
              <TaskInput
                aria-label="Enter your task"
                placeholder="Enter your task"
                value={draft}
                onChange={(e) => setDraft(e.target.value)}
              />
              <AddButton type="submit">Add your task</AddButton>
            </TaskForm>
            {notes.map((note) => (
              <Note key={note.id} $done={note.done}>
                <NoteActions>
                  <Check
                    id={`note-${note.id}`}
                    type="checkbox"
                    checked={note.done}
                    onChange={() => setNotes(notes.map((n) => (n.id === note.id ? { ...n, done: !n.done } : n)))}
                  />
                  <PlainButton
                    aria-label={`Delete ${note.text}`}
                    onClick={() => setNotes(notes.filter((n) => n.id !== note.id))}
                  >
                    <FaTrashAlt size={26} />
                  </PlainButton>
                </NoteActions>
                <NoteText htmlFor={`note-${note.id}`} $done={note.done}>
                  {note.text}
                </NoteText>
              </Note>
            ))}
          </Board>
        </Page>
        <VerticalBar>
          <Arrow d="M0 8l5-6 5 6z" color="#a3a3a3" />
          <VerticalTrack>
            <VerticalThumb />
          </VerticalTrack>
          <Arrow d="M0 2l5 6 5-6z" color="#505050" />
        </VerticalBar>
        <HorizontalBar>
          <Arrow d="M7 0L1 5l6 5z" color="#a3a3a3" />
          <HorizontalTrack>
            <HorizontalThumb />
          </HorizontalTrack>
          <Arrow d="M3 0l6 5-6 5z" color="#505050" />
        </HorizontalBar>
        <Corner />
      </Viewport>

      <Taskbar>
        <Weather>
          <SunIcon />
          <WeatherText>
            <span>90°F</span>
            <Muted>Partly sunny</Muted>
          </WeatherText>
        </Weather>
        <AppRow>
          <AppButton aria-label="Start">
            <WindowsIcon />
          </AppButton>
          <SearchBox>
            <svg width="20" height="20" viewBox="0 0 20 20" fill="none" stroke="#e4e6ee" strokeWidth="2" strokeLinecap="round">
              <circle cx="9" cy="9" r="7.500" />
              <path d="M14.500 14.500L19 19" />
            </svg>
            <SearchInput type="text" placeholder="Search" aria-label="Search" />
            <BearIcon />
          </SearchBox>
          <AppButton aria-label="Task view">
            <TaskViewIcon />
          </AppButton>
          <AppButton aria-label="File Explorer" $running>
            <ExplorerIcon />
          </AppButton>
          <AppButton aria-label="Edge">
            <EdgeIcon />
          </AppButton>
          <AppButton aria-label="Store">
            <StoreIcon />
          </AppButton>
          <AppButton aria-label="Chrome">
            <ChromeLogo />
          </AppButton>
          <AppButton aria-label="Chrome, profile window" $active>
            <ChromeLogo />
            <ProfileBadge>
              <Panda size={21} />
            </ProfileBadge>
          </AppButton>
          <AppButton aria-label="Visual Studio Code" $running>
            <CodeIcon />
          </AppButton>
          <AppButton aria-label="Photos" $running>
            <PhotosIcon />
          </AppButton>
          <AppButton aria-label="WhatsApp" $running>
            <FaWhatsapp size={33} color="#25d366" />
            <Badge>99+</Badge>
          </AppButton>
        </AppRow>
        <Tray>
          <ChevronUp size={20} strokeWidth={2} />
          <CloudSlot>
            <CloudIcon />
          </CloudSlot>
          <TrayStack $align="center">
            <span>ENG</span>
            <span>IN</span>
          </TrayStack>
          <StatusIcons>
            <WifiIcon />
            <VolumeIcon />
            <BatteryIcon />
          </StatusIcons>
          <TrayStack $align="right">
            <span>4:21 PM</span>
            <span>10/2/2024</span>
          </TrayStack>
          <TrayIcon>
            <BellIcon />
          </TrayIcon>
          <CopilotIcon>
            <Copilot />
          </CopilotIcon>
        </Tray>
      </Taskbar>
    </Screen>
  );
}
